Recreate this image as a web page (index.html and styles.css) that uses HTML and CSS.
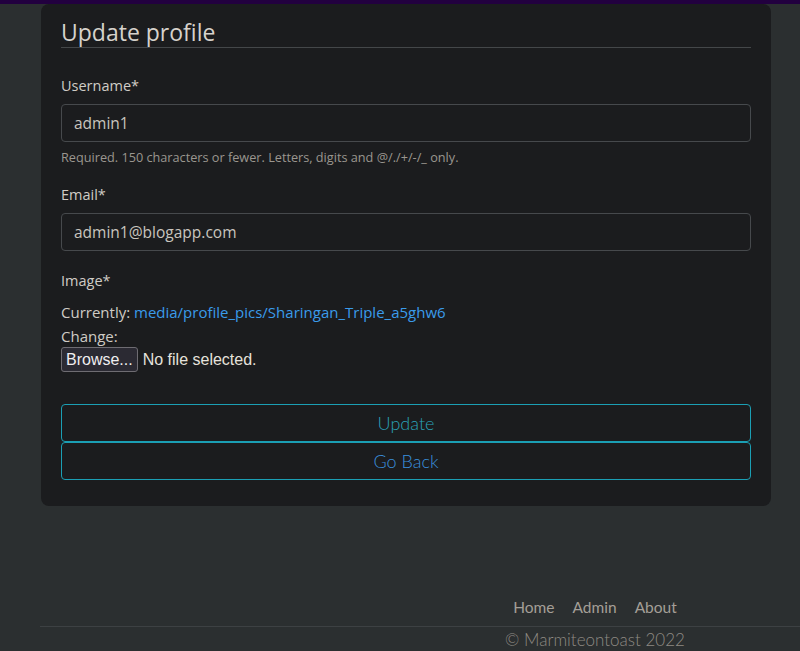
FILE: index.html
```html
<!DOCTYPE html>
<html lang="en">
<head>
<meta charset="utf-8">
<title>Update profile</title>
<link rel="stylesheet" href="styles.css">
</head>
<body>
<div class="topbar"></div>
<main class="main">
  <section class="card">
    <form class="form">
      <fieldset class="fields">
        <legend class="legend">Update profile</legend>
        <div class="group">
          <label class="label">Username*</label>
          <div class="input">admin1</div>
          <small class="help">Required. 150 characters or fewer. Letters, digits and @/./+/-/_ only.</small>
        </div>
        <div class="group">
          <label class="label">Email*</label>
          <div class="input">admin1@blogapp.com</div>
        </div>
        <div class="group image-group">
          <label class="label">Image*</label>
          <div class="current">Currently: <a class="link" href="#">media/profile_pics/Sharingan_Triple_a5ghw6</a></div>
          <div class="change">Change:</div>
          <div class="file"><span class="browse">Browse...</span><span class="nofile">No file selected.</span></div>
        </div>
      </fieldset>
      <div class="buttons">
        <button class="btn btn-update" type="button">Update</button>
        <button class="btn btn-back" type="button">Go Back</button>
      </div>
    </form>
  </section>
</main>
<footer class="footer">
  <nav class="footnav">
    <a href="#">Home</a>
    <a href="#">Admin</a>
    <a href="#">About</a>
  </nav>
  <p class="copy">© Marmiteontoast 2022</p>
</footer>
</body>
</html>
```

FILE: styles.css
```css
html, body {
  margin: 0;
  padding: 0;
  overflow: hidden;
}
body {
  background: #2b2f30;
  color: #c9c5bf;
  font-family: "Open Sans", "Noto Sans", sans-serif;
  width: 800px;
  height: 651px;
}
.topbar {
  height: 4px;
  background: #22003f;
}
.main {
  padding-left: 41px;
}
.card {
  width: 730px;
  box-sizing: border-box;
  background: #1b1c1e;
  border-radius: 8px;
  padding: 14px 20px 26px 20px;
}
.form {
  margin: 0;
}
.fields {
  border: 0;
  margin: 0;
  padding: 0;
  min-width: 0;
}
.legend {
  display: block;
  width: 100%;
  padding: 0 0 1px 0;
  font-size: 23px;
  line-height: 28px;
  color: #d6d2cc;
  border-bottom: 1px solid #444749;
  margin-bottom: 28px;
}
.group {
  margin-bottom: 20px;
}
.label {
  display: block;
  font-size: 14.5px;
  line-height: 20px;
  color: #d0ccc6;
  margin-bottom: 8px;
}
.input {
  height: 38px;
  box-sizing: border-box;
  border: 1px solid #46494c;
  border-radius: 4px;
  padding: 0 12px;
  font-size: 15.5px;
  line-height: 36px;
  color: #c9c5bf;
}
.help {
  display: block;
  font-size: 12.7px;
  line-height: 16px;
  color: #9a968f;
  margin-top: 7px;
}
.image-group {
  margin-bottom: 0;
}
.image-group .label {
  margin-bottom: 9px;
}
.current, .change {
  font-size: 15px;
  line-height: 24px;
  color: #cfcbc5;
}
.link {
  color: #3a9bea;
  text-decoration: none;
}
.file {
  display: flex;
  align-items: center;
  gap: 5px;
  font-family: "Liberation Sans", Arial, sans-serif;
  font-size: 16px;
  color: #e6e2dc;
  margin-top: -1px;
}
.browse {
  display: inline-block;
  height: 23px;
  line-height: 23px;
  padding: 0 4px;
  border: 1px solid #6e6c72;
  border-radius: 3px;
  background: #2b2a33;
  color: #f0eef0;
}
.buttons {
  margin-top: 32px;
  display: flex;
  flex-direction: column;
  gap: 0;
}
.btn {
  display: block;
  width: 100%;
  height: 38px;
  background: transparent;
  border: 1px solid #1b9fb4;
  border-radius: 4px;
  font-family: "Lato", sans-serif;
  font-weight: 300;
  font-size: 18px;
  cursor: pointer;
}
.btn-update {
  color: #2aa2b8;
}
.btn-back {
  color: #3a8fdc;
}
.footer {
  margin-top: 91px;
  margin-left: 40px;
  width: 760px;
  font-family: "Lato", sans-serif;
}
.footnav {
  display: flex;
  justify-content: center;
  gap: 18px;
  padding-left: 350px;
  padding-bottom: 9px;
  border-bottom: 1px solid #3d4143;
}
.footnav a {
  color: #a49f97;
  text-decoration: none;
  font-size: 15.5px;
  line-height: 20px;
}
.copy {
  margin: 3px 0 0 350px;
  text-align: center;
  font-size: 17px;
  font-weight: 300;
  line-height: 20px;
  color: #8e8a83;
}
```
